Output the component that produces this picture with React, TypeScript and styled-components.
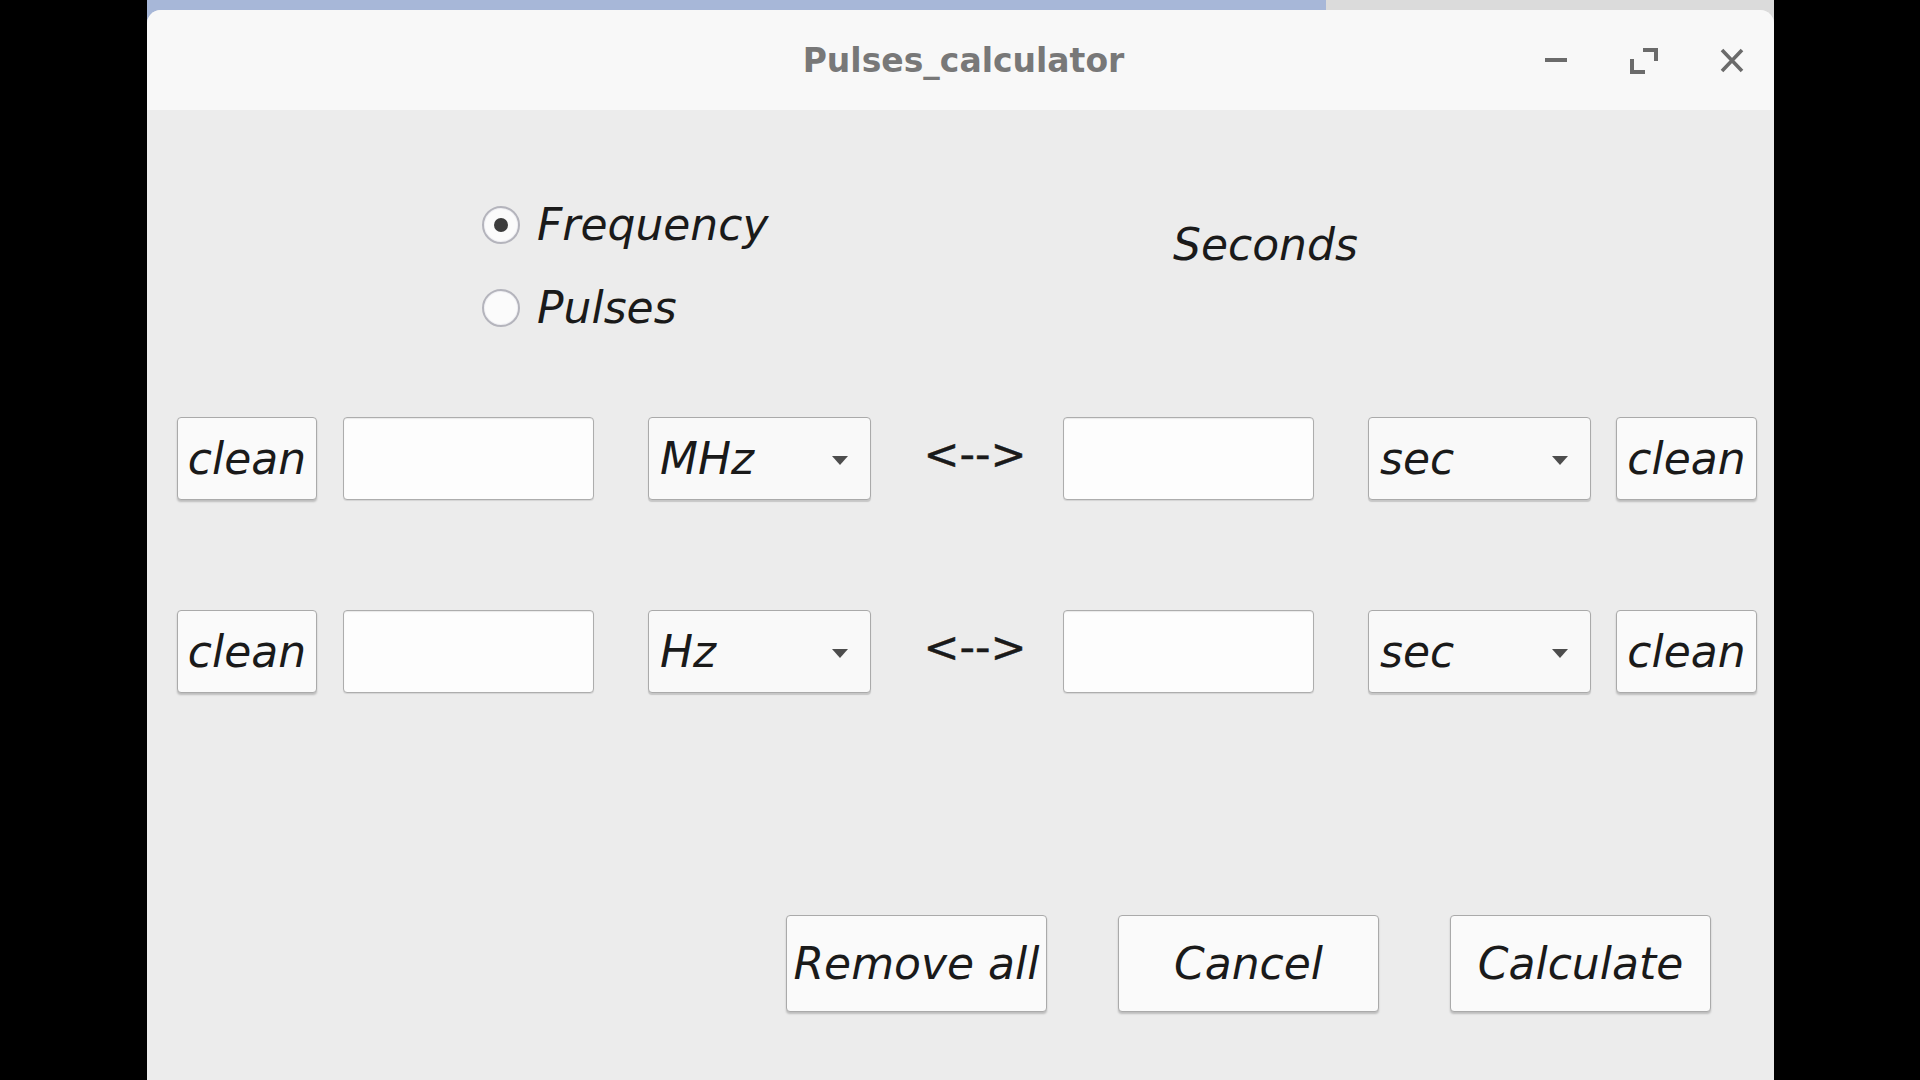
import React from "react";
import styled, { createGlobalStyle } from "styled-components";

const GlobalStyle = createGlobalStyle`
  html, body {
    margin: 0;
    padding: 0;
    background: #000;
    font-family: "DejaVu Sans", "Liberation Sans", sans-serif;
  }
  #root {
    width: 1920px;
    height: 1080px;
    overflow: hidden;
  }
`;

const Stage = styled.div`
  display: flex;
  width: 1920px;
  height: 1080px;
  background: #000;
`;

const SideBlack = styled.div<{ $w: number }>`
  width: ${(p) => p.$w}px;
  flex: none;
  background: #000;
`;

const WindowArea = styled.div`
  width: 1627px;
  flex: none;
  padding-top: 10px;
  box-sizing: border-box;
  background:
    linear-gradient(to right, #a7b7d8 0, #a7b7d8 1179px, #dbdbdb 1179px, #dbdbdb 100%) top left / 100% 40px no-repeat,
    #000;
`;

const Window = styled.div`
  height: 1070px;
  background: #ececec;
  border-radius: 14px 14px 0 0;
  overflow: hidden;
  display: flex;
  flex-direction: column;
`;

const TitleBar = styled.div`
  height: 100px;
  flex: none;
  background: #f8f8f8;
  display: grid;
  grid-template-columns: 1fr auto 1fr;
  align-items: center;
`;

const Title = styled.div`
  font-family: "DejaVu Sans", sans-serif;
  font-weight: bold;
  font-size: 33px;
  color: #787878;
  padding-left: 6px;
`;

const Controls = styled.div`
  justify-self: end;
  display: flex;
  gap: 60px;
  padding-right: 28px;
`;

const CtrlIcon = styled.svg`
  width: 28px;
  height: 28px;
  display: block;
`;

const Content = styled.div`
  display: flex;
  flex-direction: column;
  padding: 0 17px 0 30px;
  font-family: "DejaVu Sans", sans-serif;
  font-style: italic;
  font-size: 44px;
  color: #1a1a1a;
`;

const TopSection = styled.div`
  height: 307px;
  display: flex;
  padding-left: 305px;
`;

const RadioGroup = styled.div`
  width: 691px;
  margin-top: 89px;
  display: flex;
  flex-direction: column;
  gap: 31px;
`;

const RadioRow = styled.label`
  height: 52px;
  display: flex;
  align-items: center;
  gap: 17px;
  line-height: 52px;
`;

const RadioCircle = styled.span<{ $checked?: boolean }>`
  width: 38px;
  height: 38px;
  box-sizing: border-box;
  border-radius: 50%;
  border: 2px solid #b4b4bc;
  background: #fbfbfb;
  box-shadow: inset 0 0 0 1px #f0f0f4;
  display: flex;
  align-items: center;
  justify-content: center;
  &::after {
    content: "";
    width: 14px;
    height: 14px;
    border-radius: 50%;
    background: #3c3c3c;
    display: ${(p) => (p.$checked ? "block" : "none")};
  }
`;

const SideLabel = styled.div`
  margin-top: 109px;
  line-height: 52px;
  height: 52px;
`;

const Row = styled.div<{ $mt?: number }>`
  display: flex;
  height: 83px;
  margin-top: ${(p) => p.$mt ?? 0}px;
`;

const PushButton = styled.button<{ $w: number; $ml?: number }>`
  width: ${(p) => p.$w}px;
  margin-left: ${(p) => p.$ml ?? 0}px;
  flex: none;
  box-sizing: border-box;
  background: #fafafa;
  border: 1.5px solid #aaaaaa;
  border-radius: 4px;
  box-shadow: 0 2px 2px rgba(0, 0, 0, 0.2);
  font: inherit;
  color: #1a1a1a;
  padding: 0;
  display: flex;
  align-items: center;
  justify-content: center;
  white-space: nowrap;
  line-height: 52px;
`;

const TextField = styled.div<{ $w: number; $ml?: number }>`
  width: ${(p) => p.$w}px;
  margin-left: ${(p) => p.$ml ?? 0}px;
  flex: none;
  box-sizing: border-box;
  background: #fdfdfd;
  border: 1.5px solid #adadad;
  border-radius: 4px;
  box-shadow: inset 0 1px 1px rgba(0, 0, 0, 0.08), 0 1px 1px rgba(0, 0, 0, 0.1);
`;

const Combo = styled.div<{ $w: number; $ml?: number }>`
  width: ${(p) => p.$w}px;
  margin-left: ${(p) => p.$ml ?? 0}px;
  flex: none;
  box-sizing: border-box;
  background: #f9f9f9;
  border: 1.5px solid #aaaaaa;
  border-radius: 4px;
  box-shadow: 0 2px 1px rgba(0, 0, 0, 0.16);
  display: flex;
  align-items: center;
  justify-content: space-between;
  padding: 0 22px 0 11px;
  line-height: 52px;
`;

const ComboArrow = styled.span`
  width: 0;
  height: 0;
  border-left: 8px solid transparent;
  border-right: 8px solid transparent;
  border-top: 9px solid #4d4d4d;
  margin-top: 4px;
`;

const Swap = styled.div<{ $w: number; $ml?: number }>`
  width: ${(p) => p.$w}px;
  margin-left: ${(p) => p.$ml ?? 0}px;
  flex: none;
  font-style: normal;
  font-size: 43px;
  white-space: nowrap;
  display: flex;
  align-items: center;
  justify-content: center;
  padding-bottom: 10px;
  box-sizing: border-box;
  -webkit-text-stroke: 0.4px #1a1a1a;
`;

const ButtonBar = styled.div`
  display: flex;
  gap: 71px;
  height: 97px;
  margin-top: 222px;
  padding-left: 609px;
`;

function ConvRow({ unit, mt }: { unit: string; mt?: number }) {
  return (
    <Row $mt={mt}>
      <PushButton $w={140}>clean</PushButton>
      <TextField $w={251} $ml={26} />
      <Combo $w={223} $ml={54}>
        <span>{unit}</span>
        <ComboArrow />
      </Combo>
      <Swap $w={98} $ml={55}>{"<-->"}</Swap>
      <TextField $w={251} $ml={39} />
      <Combo $w={223} $ml={54}>
        <span>sec</span>
        <ComboArrow />
      </Combo>
      <PushButton $w={141} $ml={25}>clean</PushButton>
    </Row>
  );
}

export default function App() {
  return (
    <>
      <GlobalStyle />
      <Stage>
        <SideBlack $w={147} />
        <WindowArea>
          <Window>
            <TitleBar>
              <div />
              <Title>Pulses_calculator</Title>
              <Controls>
                <CtrlIcon viewBox="0 0 28 28">
                  <rect x="3" y="12" width="22" height="4" fill="#6b6b6b" />
                </CtrlIcon>
                <CtrlIcon viewBox="0 0 28 28">
                  <path d="M13 4 H26 V15" stroke="#6b6b6b" strokeWidth="4" fill="none" />
                  <path d="M2 13 V26 H15" stroke="#6b6b6b" strokeWidth="4" fill="none" />
                </CtrlIcon>
                <CtrlIcon viewBox="0 0 28 28">
                  <path d="M4 4 L24 25 M24 4 L4 25" stroke="#6b6b6b" strokeWidth="3.6" fill="none" />
                </CtrlIcon>
              </Controls>
            </TitleBar>
            <Content>
              <TopSection>
                <RadioGroup>
                  <RadioRow>
                    <RadioCircle $checked />
                    <span>Frequency</span>
                  </RadioRow>
                  <RadioRow>
                    <RadioCircle />
                    <span>Pulses</span>
                  </RadioRow>
                </RadioGroup>
                <SideLabel>Seconds</SideLabel>
              </TopSection>
              <ConvRow unit="MHz" />
              <ConvRow unit="Hz" mt={110} />
              <ButtonBar>
                <PushButton $w={261}>Remove all</PushButton>
                <PushButton $w={261}>Cancel</PushButton>
                <PushButton $w={261}>Calculate</PushButton>
              </ButtonBar>
            </Content>
          </Window>
        </WindowArea>
        <SideBlack $w={146} />
      </Stage>
    </>
  );
}
